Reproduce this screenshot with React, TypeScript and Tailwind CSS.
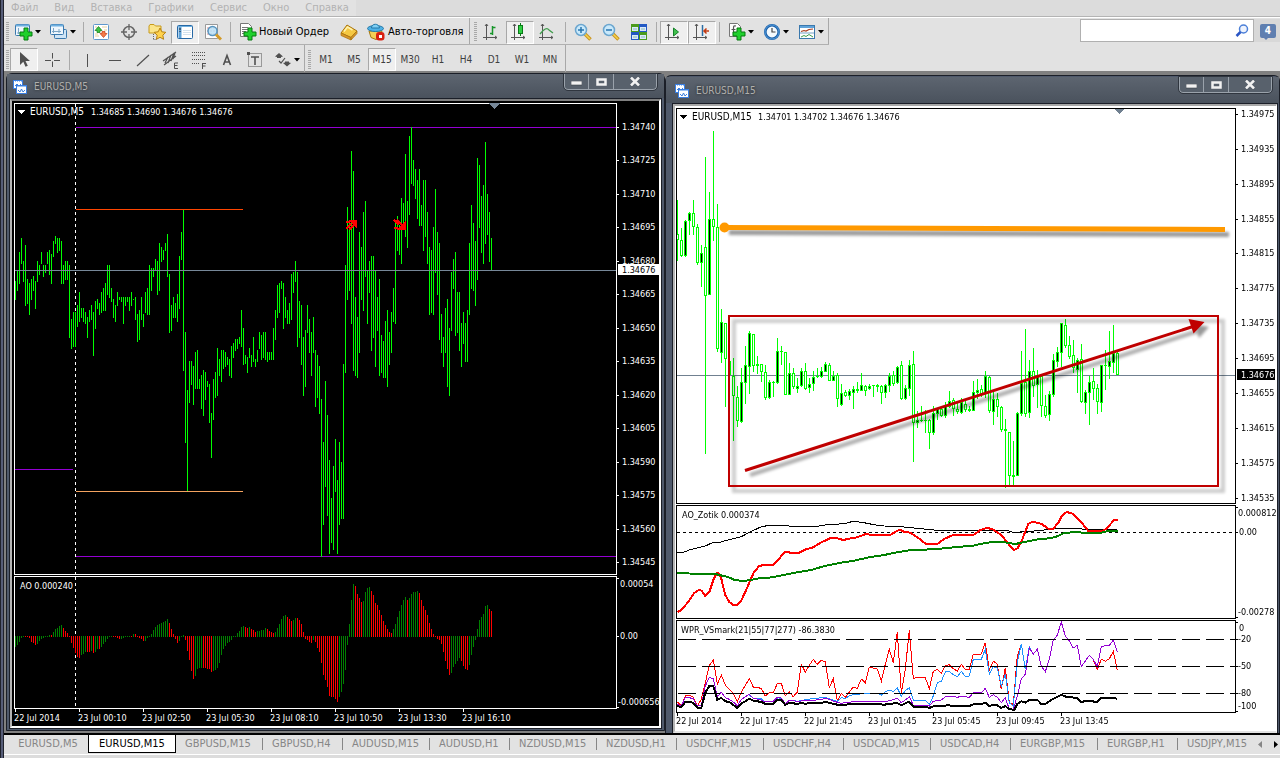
import React from "react";

const UI = "font-['DejaVu_Sans_Condensed','DejaVu_Sans','Noto_Sans',sans-serif]";

/* ---------- market data (thirds of a pixel, measured down from y = 100) ---------- */

const M5_BARS =
  "543-600 511-573 456-552 414-492 483-546 435-618 537-612 549-645 537-600 528-573 543-627 483-546 495-525 456-492 495-531 495-519 456-492 450-525 462-552 423-471 408-432 414-459 414-453 423-552 495-552 483-540 483-540 495-714 657-747 636-741 636-741 615-681 576-666 624-654 624-666 636-672 651-714 630-666 615-660 636-768 603-687 597-627 609-645 576-639 564-633 549-633 495-585 495-594 564-606 597-654 615-666 576-618 591-600 591-606 591-672 591-618 591-606 591-633 576-618 597-600 591-660 642-726 630-720 591-660 642-681 576-639 564-645 495-645 504-573 504-531 477-513 483-585 429-573 441-486 450-480 429-453 402-531 522-699 615-693 591-654 609-654 582-666 468-627 396-480 330-813 696-1029 870-1172 783-909 783-855 798-915 756-867 750-867 837-867 825-927 810-948 816-900 843-861 852-969 939-1074 837-960 816-894 744-888 777-828 750-846 750-807 756-801 771-795 777-828 738-834 729-774 717-753 717-747 711-732 630-741 684-795 765-792 771-819 744-774 765-801 711-786 777-801 750-786 696-747 705-780 696-774 696-780 756-786 756-780 756-780 684-780 630-720 555-654 549-639 543-567 549-687 591-654 630-672 609-672 522-660 516-579 483-546 516-741 603-714 615-795 711-888 690-861 615-699 657-759 696-828 651-759 750-921 765-894 798-942 897-1370 1026-1275 843-1161 945-1248 1080-1362 1194-1329 1098-1350 1017-1176 1140-1362 1026-1275 1086-1257 792-1257 495-819 321-600 366-573 153-672 213-813 591-828 651-834 396-759 441-600 336-633 303-531 510-672 483-579 468-753 468-714 510-801 591-693 537-828 705-819 723-834 663-834 630-861 696-795 636-759 564-666 369-672 348-453 375-465 294-492 309-384 162-411 303-444 108-345 81-252 180-258 207-297 240-357 207-378 315-378 240-453 240-411 336-492 441-645 450-639 381-645 267-519 396-585 429-720 642-759 711-801 624-759 597-861 684-888 516-693 477-567 456-708 576-699 576-753 669-801 636-732 669-786 630-786 429-645 315-567 369-573 423-618 174-540 195-384 288-459 255-492 126-432 282-405 336-486 414-513"
    .split(" ")
    .map((s) => s.split("-").map((v) => Math.round(Number(v) / 3) + 100));

const AO_VALUES = [
  741, 735, 726, 714, 711, 711, 712, 714, 726, 729, 735, 732, 723, 717, 714, 711, 708, 705, 705, 696, 687, 684, 678, 675, 684, 693, 699, 708, 729, 744, 759, 771, 774, 765, 762, 756, 756,
  756, 753, 759, 756, 747, 747, 741, 732, 726, 717, 711, 708, 709, 711, 714, 717, 716, 714, 711, 709, 708, 708, 702, 703, 711, 714, 717, 723, 722, 714, 709, 702, 690, 681, 675, 672, 669,
  666, 663, 657, 669, 687, 702, 717, 729, 723, 711, 705, 720, 753, 780, 813, 837, 828, 807, 804, 803, 804, 805, 807, 808, 816, 813, 810, 804, 789, 765, 747, 738, 729, 726, 720, 711, 708,
  699, 693, 681, 678, 681, 684, 681, 687, 690, 696, 693, 692, 690, 689, 684, 687, 693, 696, 699, 696, 684, 672, 657, 648, 645, 651, 657, 663, 660, 654, 655, 660, 672, 696, 717, 720, 726,
  729, 720, 726, 744, 756, 789, 825, 840, 861, 888, 891, 892, 897, 906, 891, 876, 852, 810, 735, 672, 600, 552, 558, 582, 594, 606, 603, 576, 564, 561, 573, 585, 609, 615, 630, 645, 663,
  675, 687, 696, 699, 687, 672, 651, 633, 615, 600, 591, 600, 594, 582, 576, 575, 573, 579, 600, 618, 630, 645, 669, 687, 702, 709, 717, 720, 732, 756, 783, 807, 825, 819, 801, 792, 783,
  774, 783, 798, 807, 810, 795, 765, 741, 720, 687, 660, 651, 642, 618, 615, 627, 633,
];

/* wickTop, bodyTop, bodyBottom, wickBottom, u = rising / d = falling */
const M15_CANDLES =
  "300,402,420,483,d 384,420,467,471,d 360,363,467,471,u 336,340,364,405,u 300,340,382,405,d 372,381,488,495,d 435,460,488,560,u 171,441,587,1062,d 276,358,584,585,u 93,358,382,423,d 312,381,748,756,d 627,666,760,789,u 669,669,778,921,d 782,784,826,828,d 774,827,887,1022,d 858,891,962,981,d 804,846,965,968,u 738,796,849,912,u 693,699,800,882,u 702,702,798,816,d 768,791,798,822,d 792,792,815,846,d 795,815,893,900,d 840,846,895,897,u 843,846,850,891,u 714,753,849,852,u 738,753,756,795,d 756,756,884,886,d 789,819,884,886,u 804,819,861,867,d 834,858,867,879,u 804,813,858,860,u 789,813,868,870,d 834,852,864,879,u 813,831,851,873,u 804,828,831,834,u 801,813,831,834,u 786,793,815,816,u 789,795,842,843,d 813,827,842,843,u 819,825,898,921,d 852,878,916,917,u 870,877,887,891,d 867,873,887,900,u 858,867,878,926,u 846,867,872,879,d 819,855,872,873,u 855,858,872,888,d 852,858,868,870,u 855,855,858,891,u 852,856,860,876,u 855,858,878,911,d 852,855,878,893,u 819,828,857,876,u 813,825,851,858,d 798,801,850,852,u 783,796,898,899,d 855,864,898,900,u 780,796,868,888,u 753,793,968,1086,d 933,960,970,984,u 918,960,963,966,u 930,960,962,999,d 957,960,1000,1047,d 918,939,998,1005,u 924,924,942,960,u 918,927,948,950,d 906,915,949,954,u 873,903,921,924,u 894,900,927,947,d 903,926,935,941,d 894,906,938,942,u 897,912,930,936,d 918,927,932,936,d 843,877,932,934,u 837,870,880,896,u 855,867,885,891,d 813,828,879,894,u 828,831,933,938,d 870,897,935,974,u 879,897,922,951,d 918,921,990,996,d 957,987,993,1164,d 996,996,1128,1155,d 1023,1125,1131,1155,u 936,939,1127,1128,u 753,849,941,947,u 687,846,942,950,d 780,813,938,954,u 744,813,857,891,d 810,828,855,923,u 822,828,917,951,d 885,918,947,954,d 873,882,945,963,u 762,780,884,891,u 741,756,785,800,u 669,669,758,800,u 657,676,737,744,d 708,735,771,777,d 720,765,803,819,d 774,780,809,879,u 732,777,905,909,d 870,876,908,941,u 828,845,878,975,u 804,843,867,900,d 852,864,906,942,d 795,796,908,936,u 750,795,798,870,u 693,783,802,837,u 675,759,788,819,u 756,759,825,826,d"
    .split(" ")
    .map((s) => {
      const p = s.split(",");
      const n = p.slice(0, 4).map((v) => Math.round(Number(v) / 3) + 100);
      return { wt: n[0], bt: n[1], bb: n[2], wb: n[3], up: p[4] === "u" };
    });

/* indicator curves: x:y pairs in thirds of a pixel from (664, 496) */
const curve = (src: string) =>
  src
    .trim()
    .split(/\s+/)
    .map((p) => {
      const [x, y] = p.split(":").map(Number);
      return `${(664 + x / 3).toFixed(1)},${(496 + y / 3).toFixed(1)}`;
    })
    .join(" ");

const ZOTIK_BLACK = curve(
  "40:170 56:170 75:162 100:156 124:150 145:140 170:138 200:130 232:122 260:107 290:93 315:88 360:88 380:91 460:91 490:86 540:83 568:76 600:80 630:86 660:90 700:91 750:96 820:103 930:103 1028:103 1048:109 1090:107 1130:103 1180:98 1240:97 1260:100 1360:100"
);
const ZOTIK_RED = curve(
  "40:348 52:342 75:315 90:292 104:282 113:284 124:300 136:288 148:252 158:232 164:232 172:248 184:297 196:318 208:327 220:326 232:313 244:288 256:260 270:228 285:211 300:206 328:206 345:189 362:167 385:171 403:171 425:160 448:154 470:140 500:126 520:127 538:132 555:128 580:124 605:114 625:117 678:117 695:107 708:101 720:107 738:110 760:124 785:143 820:144 840:129 865:118 888:117 928:117 948:103 968:96 985:99 1013:118 1038:150 1051:162 1061:156 1075:130 1093:84 1106:77 1133:84 1153:98 1168:98 1183:80 1193:60 1208:48 1228:54 1253:80 1273:105 1318:105 1333:92 1350:72 1361:72"
);
const ZOTIK_GREEN = curve(
  "40:231 90:233 155:234 165:237 190:242 210:251 235:255 255:253 285:247 325:244 360:237 400:229 445:221 485:209 530:200 570:194 615:184 660:177 700:169 740:162 810:160 850:156 888:152 928:149 948:144 983:138 1018:138 1053:144 1078:139 1128:129 1158:127 1183:120 1198:112 1238:107 1258:111 1308:111 1328:106 1361:105"
);
const WPR_BLACK = curve(
  "40:630 52:633 64:618 76:618 88:620 100:635 112:635 124:590 136:570 148:570 160:611 172:606 184:616 196:618 208:627 220:636 232:622 244:616 256:608 268:614 280:616 292:618 304:624 316:623 328:623 340:612 352:611 364:627 376:620 388:622 400:624 412:621 424:623 440:621 470:621 485:618 510:624 530:628 560:624 640:624 660:626 700:621 712:628 724:622 736:617 748:632 784:632 796:636 808:631 840:630 852:627 864:630 916:630 928:625 952:625 964:620 976:630 988:627 1000:628 1012:636 1024:630 1036:640 1051:641 1060:624 1072:616 1084:620 1096:611 1120:611 1132:624 1144:624 1158:614 1173:606 1192:597 1206:602 1240:606 1252:618 1270:614 1300:618 1312:606 1348:605 1360:609"
);
const WPR_PURPLE = curve(
  "40:625 52:630 64:605 76:605 88:608 100:630 112:628 124:570 136:544 148:548 160:602 172:589 184:605 196:610 208:618 220:630 232:610 256:595 268:606 292:612 304:618 328:616 340:604 352:606 364:624 376:613 400:616 424:614 472:611 484:606 508:615 530:622 560:618 670:616 700:607 712:620 724:612 736:602 748:628 784:628 796:630 808:616 832:612 844:602 868:600 880:604 892:601 916:604 928:590 952:590 964:577 976:604 988:596 1000:604 1012:620 1024:605 1036:640 1048:640 1060:600 1072:548 1084:535 1096:456 1108:474 1120:460 1132:510 1144:527 1156:490 1168:432 1180:418 1192:378 1204:420 1216:435 1228:456 1240:448 1252:511 1264:495 1276:478 1288:490 1300:513 1312:451 1336:448 1348:433 1360:468"
);
const WPR_BLUE = curve(
  "256:597 268:606 292:608 304:618 328:615 345:604 364:624 376:612 400:616 430:610 484:604 508:612 520:616 532:605 544:607 556:600 568:595 640:592 652:598 664:588 676:582 688:587 700:576 712:600 724:584 736:575 748:613 784:613 796:625 808:600 820:560 832:556 844:528 856:526 868:536 880:542 892:526 904:541 916:540 928:490 952:490 964:460 976:534 988:512 1000:516 1012:570 1024:535 1036:620 1048:630 1060:500 1072:443 1084:520 1096:452 1108:474"
);
const WPR_RED = curve(
  "40:618 52:630 64:600 76:598 88:604 100:630 112:610 124:560 136:508 148:492 160:564 172:537 184:567 208:592 220:618 232:588 256:548 268:573 292:577 304:600 316:590 328:590 340:563 352:562 364:600 376:588 388:602 400:588 412:505 424:528 436:508 448:490 460:505 472:493 484:497 496:575 508:548 520:615 532:592 544:604 568:573 580:577 592:549 604:560 616:513 640:519 652:556 664:505 676:460 688:500 700:408 712:590 724:520 736:402 748:548 760:544 784:545 796:578 808:526 820:520 832:532 844:510 856:506 868:518 880:525 892:505 904:520 916:520 928:475 952:474 964:440 976:522 988:495 1000:505 1012:580 1024:515 1036:620 1048:625 1060:480 1072:445"
);
const WPR_RED_TAIL = curve("1288:492 1300:520 1312:490 1324:496 1336:488 1348:466 1360:522");

/* ---------- charts ---------- */

function ChartM5() {
  const prices = ["1.34740", "1.34725", "1.34710", "1.34695", "1.34680", "1.34665", "1.34650", "1.34635", "1.34620", "1.34605", "1.34590", "1.34575", "1.34560", "1.34545"];
  const times = ["22 Jul 2014", "23 Jul 00:10", "23 Jul 02:50", "23 Jul 05:30", "23 Jul 08:10", "23 Jul 10:50", "23 Jul 13:30", "23 Jul 16:10"];
  return (
    <svg viewBox="12 101 647 625" className={`block h-auto w-full bg-black text-[9px] ${UI}`} role="img" aria-label="EURUSD,M5" shapeRendering="crispEdges">
      <path d="M75.5 104V574M75.5 577V708" stroke="#fff" strokeDasharray="3 3" />
      <path d="M76 127.5H616M15 469.5H73M76 556.5H616" stroke="#9400d3" />
      <path d="M76 209.5H243" stroke="#ff4500" />
      <path d="M76 491.5H243" stroke="#f4a460" />
      {M5_BARS.map(([a, b], i) => (
        <rect key={i} x={15 + 2 * i} y={a} width={1} height={Math.max(1, b - a)} fill="#0f0" />
      ))}
      <path d="M15 270.5H616" stroke="#778899" />
      {AO_VALUES.map((v, i) => {
        const y = Math.round(v / 3) + 400;
        const rising = i === 0 || v < AO_VALUES[i - 1];
        const top = Math.min(y, 636);
        return <rect key={i} x={15 + 2 * i} y={top} width={1} height={Math.max(1, Math.max(y, 637) - top)} fill={rising ? "#008000" : "#f00"} />;
      })}
      <g stroke="#f00" fill="#f00">
        <path d="M346 229l5-5M349 230l5-5M346 222h4" strokeWidth="2" />
        <path d="M349 220h7v7z" />
        <path d="M394 220l5 5M397 220l5 5M394 228h4" strokeWidth="2" />
        <path d="M398 229h7v-7z" />
      </g>
      <path d="M14.5 103.5H616.5V574.5H14.5ZM14.5 576.5H616.5V708.5H14.5Z" fill="none" stroke="#fff" />
      <path d="M489 103h11l-5.500 6z" fill="#778899" />
      <path d="M18 110h7l-3.500 4z" fill="#fff" />
      <g fill="#fff">
        <text x="30" y="115" className="text-[10px]">EURUSD,M5</text>
        <text x="91" y="115">1.34685 1.34690 1.34676 1.34676</text>
        <text x="20" y="589">AO 0.000240</text>
        {prices.map((p, i) => {
          const y = Math.round(127 + i * 33.46);
          return (
            <g key={p}>
              <rect x="617" y={y} width="2" height="1" />
              <text x="622" y={y + 3}>{p}</text>
            </g>
          );
        })}
        <rect x="618" y="264" width="41" height="11" />
        <text x="622" y="273" fill="#000">1.34676</text>
        <rect x="617" y="636" width="2" height="1" />
        <rect x="617" y="578" width="2" height="1" />
        <rect x="617" y="707" width="2" height="1" />
        <text x="620" y="587">0.00054</text>
        <text x="620" y="639">0.00</text>
        <text x="618" y="705">-0.000656</text>
        {times.map((t, i) => (
          <g key={t}>
            <rect x={15 + 64 * i} y="709" width="1" height="3" />
            <text x={14 + 64 * i} y="721">{t}</text>
          </g>
        ))}
      </g>
    </svg>
  );
}

function ChartM15() {
  const prices = ["1.34975", "1.34935", "1.34895", "1.34855", "1.34815", "1.34775", "1.34735", "1.34695", "1.34655", "1.34615", "1.34575", "1.34535"];
  const times = ["22 Jul 2014", "22 Jul 17:45", "22 Jul 21:45", "23 Jul 01:45", "23 Jul 05:45", "23 Jul 09:45", "23 Jul 13:45"];
  return (
    <svg viewBox="675 106 601 625" className={`block h-auto w-full bg-white text-[9px] ${UI}`} role="img" aria-label="EURUSD,M15" shapeRendering="crispEdges">
      <defs>
        <filter id="soft" x="-10%" y="-20%" width="120%" height="140%">
          <feGaussianBlur stdDeviation="1.500" />
        </filter>
        <filter id="softLine" filterUnits="userSpaceOnUse" x="700" y="210" width="560" height="50">
          <feGaussianBlur stdDeviation="1.500" />
        </filter>
      </defs>
      <path d="M677 375.500H1235" stroke="#708090" />
      {M15_CANDLES.map((c, i) => {
        const x = 677 + 4 * i;
        const h = Math.max(1, c.bb - c.bt);
        const left = i === 0 ? x : x - 1;
        return (
          <g key={i}>
            <rect x={x} y={c.wt} width={1} height={c.wb - c.wt} fill="#0f0" />
            <rect x={left} y={c.bt} width={x + 2 - left} height={h} fill="#0f0" />
            {h > 2 && <rect x={x} y={c.bt + 1} width={1} height={h - 2} fill={c.up ? "#000" : "#fff"} />}
          </g>
        );
      })}

      <g shapeRendering="auto">
        <g stroke="#000" fill="none" opacity="0.4">
          <path d="M729 232.500L1229 234.500" strokeWidth="5" filter="url(#softLine)" />
          <path d="M734 321H1223V491H734Z" strokeWidth="4" opacity="0.500" filter="url(#soft)" />
          <path d="M750 475L1198 331" strokeWidth="4" opacity="0.800" filter="url(#soft)" />
          <path d="M1194 324L1209 327L1199 338Z" fill="#000" stroke="none" filter="url(#soft)" />
        </g>
        <path d="M724 227.500L1225 229.500" stroke="#ff9900" strokeWidth="5" />
        <circle cx="724.500" cy="227.500" r="5" fill="#ff9900" />
        <path d="M729 316H1218V486H729Z" fill="none" stroke="#c00000" strokeWidth="2" />
        <path d="M745 470.500L1193 326.500" stroke="#c00000" strokeWidth="3" />
        <path d="M1188.500 319L1204.500 322L1193.500 333.500Z" fill="#c00000" />
      </g>

      <path d="M677 532.500H1235" stroke="#000" strokeDasharray="3 3" />
      <g fill="none">
        <polyline points={ZOTIK_BLACK} stroke="#000" />
        <polyline points={ZOTIK_RED} stroke="#f00" strokeWidth="2" />
        <polyline points={ZOTIK_GREEN} stroke="#008000" strokeWidth="2" />
        <polyline points={WPR_RED} stroke="#f00" />
        <polyline points={WPR_RED_TAIL} stroke="#f00" />
        <polyline points={WPR_BLUE} stroke="#1e90ff" />
        <polyline points={WPR_PURPLE} stroke="#9400d3" />
        <polyline points={WPR_BLACK} stroke="#000" strokeWidth="2" />
      </g>
      <path d="M678 639.500H1235M678 666.500H1235M678 693.500H1235" stroke="#000" strokeDasharray="18 6" />

      <path d="M676.500 108.500H1235.500V503.500H676.500ZM676.500 505.500H1235.500V618.500H676.500ZM676.500 620.500H1235.500V712.500H676.500Z" fill="none" stroke="#000" />
      <path d="M1114 109h11l-5.500 5z" fill="#708090" />
      <path d="M680 115h7l-3.500 4z" />
      <text x="692" y="120" className="text-[10px]">EURUSD,M15</text>
      <text x="758" y="120">1.34701 1.34702 1.34676 1.34676</text>
      <text x="682" y="518">AO_Zotik 0.000374</text>
      <text x="681" y="633">WPR_VSmark(21|55|77|277) -86.3830</text>
      {prices.map((p, i) => {
        const y = Math.round(114 + i * 34.87);
        return (
          <g key={p}>
            <rect x="1236" y={y} width="2" height="1" />
            <text x="1241" y={y + 3}>{p}</text>
          </g>
        );
      })}
      <rect x="1237" y="369" width="38" height="11" />
      <text x="1241" y="378" fill="#fff">1.34676</text>
      {[507, 532, 617, 622, 639, 666, 693, 711].map((y) => (
        <rect key={y} x="1236" y={y} width="2" height="1" />
      ))}
      <text x="1238" y="516">0.000812</text>
      <text x="1239" y="535">0.00</text>
      <text x="1238" y="615">-0.00278</text>
      <text x="1239" y="631">0</text>
      <text x="1238" y="642">-20</text>
      <text x="1238" y="669">-50</text>
      <text x="1238" y="696">-80</text>
      <text x="1238" y="709">-100</text>
      {times.map((t, i) => (
        <g key={t}>
          <rect x={677 + 64 * i} y="713" width="1" height="3" />
          <text x={676 + 64 * i} y="724">{t}</text>
        </g>
      ))}
    </svg>
  );
}

/* ---------- icons ---------- */

function Ico({ children }: { children: React.ReactNode }) {
  return (
    <svg width="18" height="18" viewBox="0 0 18 18" fill="none" aria-hidden="true" className="shrink-0">
      {children}
    </svg>
  );
}

const plus = (x: number, y: number) => (
  <path d={`M${x + 4} ${y}h4v4h4v4h-4v4h-4v-4h-4v-4h4z`} fill="#1fd02c" stroke="#067a10" />
);
const axes = <path d="M3.500 1v16M0 14.500h14M2 3l1.500-2L5 3M12 13l2 1.500-2 1.500" stroke="#555" />;

const icons: Record<string, React.ReactNode> = {
  newChart: (
    <>
      <rect x="0.500" y="1.500" width="14" height="11" rx="1" fill="#eef6fd" stroke="#3a78ad" />
      <path d="M1 2.500h13" stroke="#6fb0e0" strokeWidth="2" />
      <path d="M3.500 5v6M2 10h9" stroke="#7ba5c5" />
      {plus(5, 5)}
    </>
  ),
  profiles: (
    <>
      <rect x="4.500" y="6.500" width="12" height="9" rx="1" fill="#cfe5f7" stroke="#3a78ad" />
      <rect x="0.500" y="1.500" width="13" height="10" rx="1" fill="#eef6fd" stroke="#3a78ad" />
      <path d="M1 2.500h12" stroke="#6fb0e0" strokeWidth="2" />
      <path d="M3.500 5v5M2 8.500h9M9 6v4" stroke="#7ba5c5" />
    </>
  ),
  market: (
    <>
      <rect x="1.500" y="1.500" width="15" height="15" rx="1" fill="#fff" stroke="#5f97cc" />
      <path d="M3 4h2M10 4h5M12 7h3M3 13h4M3 11h3" stroke="#e6cf9c" />
      <path d="M6.500 3.500l3.500 4H8v2H5v-2H3z" fill="#3ec343" stroke="#107a16" strokeWidth="0.700" />
      <path d="M11.500 14.500l-3.500-4h2v-2h3v2h2z" fill="#f37c4a" stroke="#c93c12" strokeWidth="0.700" />
    </>
  ),
  target: (
    <>
      <circle cx="9" cy="9" r="5.500" stroke="#666" strokeWidth="1.500" />
      <path d="M9 1v6M9 11v6M1 9h6M11 9h6" stroke="#666" strokeWidth="1.300" />
    </>
  ),
  navigator: (
    <>
      <path d="M1 3l1-1.500h4L7.500 3H13v7H1z" fill="#fbe58a" stroke="#c79a1c" />
      <path d="M5.500 11v6M5.500 16.500h3" stroke="#666" strokeDasharray="1 1" />
      <path d="M12 5l1.800 3.800 4 .5-3 2.900.8 4.100-3.600-2-3.600 2 .8-4.100-3-2.900 4-.5z" fill="#ffd24d" stroke="#b8820f" />
    </>
  ),
  terminal: (
    <>
      <rect x="1.500" y="2.500" width="15" height="13" rx="1" fill="#fff" stroke="#2668a5" />
      <path d="M2 3.500h14" stroke="#6fb0e0" />
      <path d="M4 4v11" stroke="#5ea3da" strokeWidth="3" />
      <path d="M4 5v2M4 8v1" stroke="#222" />
      <path d="M7 7.500h8M7 9.500h8M7 11.500h8" stroke="#d3e2ee" />
    </>
  ),
  tester: (
    <>
      <path d="M1.500 1.500h12v14h-12z" fill="#fdfdfd" stroke="#999" />
      <path d="M3 5h9M3 8h9M3 11h9" stroke="#d88" strokeDasharray="2 1" />
      <circle cx="8.500" cy="8" r="4.500" fill="#b9e0f7" fillOpacity="0.850" stroke="#5795bf" strokeWidth="1.500" />
      <path d="M12 11.500l5 5" stroke="#d39a27" strokeWidth="3" />
    </>
  ),
  order: (
    <>
      <path d="M1.500 0.500h8l3 3v10h-11z" fill="#fff" stroke="#777" />
      <path d="M3 4.500h6M3 6.500h7M3 8.500h4M3 10.500h3" stroke="#777" />
      {plus(5, 5)}
    </>
  ),
  meta: (
    <>
      <path d="M1 10l6-8 10 6-6 6.500z" fill="#f5c842" stroke="#a8720c" />
      <path d="M1 10v2.500l10 4.500v-2.500zM11 14.500V17l6-6.500V8z" fill="#d8962a" stroke="#a8720c" strokeWidth="0.700" />
      <path d="M4 8.500l3.500-4.500 5 3" stroke="#fff3b0" strokeWidth="1.500" />
    </>
  ),
  auto: (
    <>
      <path d="M2 8h13l-2 6-4 2.500-5-2z" fill="#f4cf56" stroke="#a8790e" />
      <ellipse cx="8.500" cy="5.500" rx="8" ry="3" fill="#4fb2e6" stroke="#2478a8" />
      <path d="M4.500 5C4.500 0 12 0 12.500 5z" fill="#7fd0f5" stroke="#2478a8" />
      <rect x="9" y="9" width="8.500" height="8.500" rx="3" fill="#d92011" />
      <rect x="12" y="12" width="3" height="3" fill="#fff" />
    </>
  ),
  bars: (
    <>
      {axes}
      <path d="M9.500 3v9M9.500 4.500h3M7 10.500h3" stroke="#17962a" strokeWidth="1.500" />
    </>
  ),
  candles: (
    <>
      {axes}
      <path d="M9.500 0v13" stroke="#0a7a18" />
      <rect x="7.500" y="2.500" width="4" height="8" fill="#2fd043" stroke="#0a7a18" />
    </>
  ),
  line: (
    <>
      {axes}
      <path d="M1 11c4-5 7-7 9-4l4 3" stroke="#3f9c4c" strokeWidth="1.300" />
    </>
  ),
  zoomIn: (
    <>
      <path d="M11 11l5.500 5.500" stroke="#c99320" strokeWidth="3.500" />
      <path d="M11 11l5 5" stroke="#f5d34d" strokeWidth="1.500" />
      <circle cx="7" cy="7" r="5.500" fill="#c9e9fb" stroke="#6ba6cf" strokeWidth="1.500" />
      <path d="M4 7h6M7 4v6" stroke="#2975b0" strokeWidth="1.500" />
    </>
  ),
  zoomOut: (
    <>
      <path d="M11 11l5.500 5.500" stroke="#c99320" strokeWidth="3.500" />
      <path d="M11 11l5 5" stroke="#f5d34d" strokeWidth="1.500" />
      <circle cx="7" cy="7" r="5.500" fill="#c9e9fb" stroke="#6ba6cf" strokeWidth="1.500" />
      <path d="M4 7h6" stroke="#2975b0" strokeWidth="1.500" />
    </>
  ),
  tile: (
    <>
      <rect x="1" y="1" width="8" height="8" fill="#4b9b1c" />
      <rect x="9" y="1" width="8" height="8" fill="#2359c4" />
      <rect x="1" y="9" width="8" height="8" fill="#2359c4" />
      <rect x="9" y="9" width="8" height="8" fill="#4b9b1c" />
      <path d="M2 4h6v4H2zM10 4h6v4h-6zM2 12h6v4H2zM10 12h6v4h-6z" fill="#dceaf8" />
      <path d="M3 6h4M11 6h4M3 14h4M11 14h4" stroke="#8bb" />
    </>
  ),
  autoScroll: (
    <>
      {axes}
      <path d="M8.500 5v8l5-4z" fill="#3fc14c" stroke="#17802a" />
    </>
  ),
  shift: (
    <>
      {axes}
      <path d="M9.500 2v11" stroke="#2b6ca3" strokeWidth="1.500" />
      <path d="M16 8h-5M13.500 5.500L11 8l2.500 2.500" stroke="#c23b14" strokeWidth="1.500" />
    </>
  ),
  indicators: (
    <>
      <path d="M1.500 0.500h8l3 3v10h-11z" fill="#fff" stroke="#777" />
      <path d="M8 3c-2-.5-2.500 0-2.500 2v7M3.500 6.500h4" stroke="#555" strokeWidth="1.200" />
      {plus(5, 5)}
    </>
  ),
  clock: (
    <>
      <circle cx="9" cy="9" r="6.700" fill="#f4fafe" stroke="#1f63ab" strokeWidth="2.600" />
      <circle cx="9" cy="9" r="7" stroke="#4e97d8" />
      <path d="M9 5v4h3.500" stroke="#444" strokeWidth="1.200" />
    </>
  ),
  template: (
    <>
      <rect x="1.500" y="2.500" width="15" height="13" fill="#fff" stroke="#3a78ad" />
      <path d="M2 4h14" stroke="#5fa3da" strokeWidth="2" />
      <path d="M3 8.500l3-1 2 .500 3-1.500 4-.500" stroke="#a83a1c" strokeWidth="1.200" />
      <path d="M2 10h14" stroke="#3a78ad" strokeWidth="0.700" />
      <path d="M3 14l3-1.500 2 1 3-2 4 2.500" stroke="#3f9c4c" />
    </>
  ),
  cursor: <path d="M5 1v13l3.300-3.200 2.200 5 2.300-1-2.300-4.800H15z" fill="#505050" />,
  cross: <path d="M9.500 2v5.500M9.500 10.500V16M2 9.500h6M11 9.500h6" stroke="#505050" />,
  vline: <path d="M9.500 3v13" stroke="#505050" />,
  hline: <path d="M3 9.500h12" stroke="#505050" />,
  trend: <path d="M3 15L15 4" stroke="#505050" strokeWidth="1.200" />,
  channel: (
    <>
      <path d="M1 10L14 1M2 14L14 5M3 12l3-6M6 12l3-8M9 10l3-8M11 8l2-6" stroke="#505050" strokeWidth="1.200" />
      <path d="M16 12h-3.500v5.500H16M12.500 14.500h3" stroke="#505050" />
    </>
  ),
  fibo: (
    <>
      <path d="M2 1.500h14M2 4.500h14M2 8.500h14M2 12.500h8" stroke="#505050" strokeDasharray="1 1" />
      <path d="M16 12.500h-3.500M12.500 12v6M12.500 15h3" stroke="#505050" />
    </>
  ),
  letterA: <path d="M5.500 14L9 4.500l3.500 9.500M6.500 11h5" stroke="#505050" strokeWidth="1.600" />,
  label: (
    <>
      <path d="M2.500 2.500h13v13h-13z" stroke="#505050" strokeDasharray="1 1" />
      <path d="M5 6h8M9 6v8" stroke="#505050" strokeWidth="1.600" />
      <path d="M1 1h3v3H1z" fill="#505050" />
    </>
  ),
  arrows: (
    <>
      <path d="M1 5.500L5 2l4 3.500-2 .500v1H3V6zM9 12l2-.500v-1h4v1l2 .500-4 3.500z" fill="#505050" />
      <path d="M5 10l2 2 4-5" stroke="#505050" strokeWidth="1.200" />
    </>
  ),
};

/* ---------- toolbars ---------- */

const pressedCls = "border border-t-[#a8a8a8] border-l-[#a8a8a8] border-r-white border-b-white bg-[#efefef]";

function Tool({ name, label, pressed, menu }: { name: string; label: string; pressed?: boolean; menu?: boolean }) {
  return (
    <button
      type="button"
      aria-label={label}
      aria-pressed={pressed}
      className={`flex h-[23px] shrink-0 items-center justify-center ${menu ? "w-[35px]" : "w-7"} ${pressed ? pressedCls : ""}`}
    >
      <Ico>{icons[name]}</Ico>
      {menu && (
        <svg width="6" height="4" viewBox="0 0 6 4" aria-hidden="true" className="ml-[2px] shrink-0">
          <path d="M0 0h6L3 3.500z" fill="#000" />
        </svg>
      )}
    </button>
  );
}

const Grip = () => <span className="mr-px ml-[2px] h-5 w-[3px] shrink-0 bg-[repeating-linear-gradient(to_bottom,#a8a8a8_0_1px,#e2e2e2_1px_2px)]" />;
const Sep = () => <span className="mx-[3px] h-5 w-px shrink-0 bg-[#aaaaaa]" />;

function ToolbarMain() {
  return (
    <div className="flex h-[27px] items-center border-b border-[#b0b0b0]">
      <div className="flex h-full items-center border-r border-[#a8a8a8] pt-[2px]">
        <Grip />
        <Tool name="newChart" label="Новый график" menu />
        <Tool name="profiles" label="Профили" menu />
        <Sep />
        <Tool name="market" label="Обзор рынка" />
        <Tool name="target" label="Окно данных" />
        <Tool name="navigator" label="Навигатор" />
        <Tool name="terminal" label="Терминал" pressed />
        <Tool name="tester" label="Тестер" />
        <Sep />
        <button type="button" className="flex h-[23px] w-[101px] shrink-0 items-center gap-[2px] pl-[5px] whitespace-nowrap">
          <Ico>{icons.order}</Ico>
          Новый Ордер
        </button>
        <Tool name="meta" label="MetaEditor" />
        <button type="button" className="flex h-[23px] w-[106px] shrink-0 items-center gap-[3px] pl-[4px] whitespace-nowrap">
          <Ico>{icons.auto}</Ico>
          Авто-торговля
        </button>
      </div>
      <div className="flex h-full items-center border-r border-[#a8a8a8] pt-[2px] pl-[2px]">
        <Grip />
        <Tool name="bars" label="Бары" />
        <Tool name="candles" label="Свечи" pressed />
        <Tool name="line" label="Линия" />
        <Sep />
        <Tool name="zoomIn" label="Увеличить" />
        <Tool name="zoomOut" label="Уменьшить" />
        <Tool name="tile" label="Окна плиткой" />
        <Sep />
        <Tool name="autoScroll" label="Автопрокрутка" pressed />
        <Tool name="shift" label="Сдвиг графика" pressed />
        <Sep />
        <Tool name="indicators" label="Индикаторы" menu />
        <Tool name="clock" label="Периоды" menu />
        <Tool name="template" label="Шаблоны" menu />
      </div>
    </div>
  );
}

function ToolbarDraw() {
  return (
    <div className="flex h-[27px] items-center">
      <div className="flex h-full items-center border-r border-[#a8a8a8] pt-[2px]">
        <Grip />
        <Tool name="cursor" label="Курсор" pressed />
        <Tool name="cross" label="Перекрестие" />
        <Sep />
        <Tool name="vline" label="Вертикальная линия" />
        <Tool name="hline" label="Горизонтальная линия" />
        <Tool name="trend" label="Трендовая линия" />
        <Tool name="channel" label="Канал" />
        <Tool name="fibo" label="Фибоначчи" />
        <Tool name="letterA" label="Текст" />
        <Tool name="label" label="Метка" />
        <Tool name="arrows" label="Стрелки" menu />
      </div>
      <div className="flex h-full items-center border-r border-[#a8a8a8] pt-[2px] pr-px pl-px text-[10px] text-[#404040]">
        <Grip />
        {["M1", "M5", "M15", "M30", "H1", "H4", "D1", "W1", "MN"].map((p) => (
          <button key={p} type="button" aria-pressed={p === "M15"} className={`h-[23px] w-7 shrink-0 text-center ${p === "M15" ? pressedCls : ""}`}>
            {p}
          </button>
        ))}
      </div>
    </div>
  );
}

/* ---------- windows ---------- */

function WindowTitle({ title, tall }: { title: string; tall?: boolean }) {
  const btn = "flex h-[15px] items-center justify-center border-r border-[#9aa2ab]";
  return (
    <div className={`flex items-start bg-linear-to-b from-[#5d6570] to-[#4a525d] ${tall ? "h-[26px]" : "h-6"}`}>
      <div className={`flex h-full flex-1 items-center gap-[7px] pt-px ${tall ? "pl-[9px]" : "pl-[6px]"}`}>
        <svg width="14" height="14" viewBox="0 0 14 14" aria-hidden="true">
          <rect x="0.500" y="0.500" width="9" height="8" fill="#fff" stroke="#3b7fe0" />
          <path d="M0 1h10" stroke="#3b7fe0" strokeDasharray="1 1" />
          <path d="M2 6l2-2 2 2 2-2" stroke="#3b7fe0" fill="none" />
          <rect x="3.500" y="5.500" width="10" height="8" fill="#fff" stroke="#3b7fe0" />
          <path d="M4 6.500h9" stroke="#9cc2f5" />
          <path d="M5 10l2 2 1.500-3 1.500 3 2-2" stroke="#3b7fe0" fill="none" />
        </svg>
        <h2 className="text-[10px] font-normal text-[#b0b0ae] [text-shadow:0_0_3px_#222]">{title}</h2>
      </div>
      <div className="mr-[7px] flex rounded-b-[4px] border border-t-0 border-[#9aa2ab] bg-[#58616c] outline outline-[#30363f]">
        <button type="button" aria-label="Свернуть" className={`${btn} w-6 pt-1`}>
          <svg width="11" height="5" viewBox="0 0 11 5"><path d="M0 0h11v4H0z" fill="#f2f2f2" stroke="#3a3f47" strokeWidth="0.600" /></svg>
        </button>
        <button type="button" aria-label="Развернуть" className={`${btn} w-[25px]`}>
          <svg width="11" height="8" viewBox="0 0 11 8"><path d="M1.500 1.500h8v5h-8z" fill="none" stroke="#f2f2f2" strokeWidth="2.500" /></svg>
        </button>
        <button type="button" aria-label="Закрыть" className="flex h-[15px] w-[42px] items-center justify-center">
          <svg width="10" height="9" viewBox="0 0 10 9"><path d="M1 0.500l8 8M9 0.500l-8 8" stroke="#f2f2f2" strokeWidth="2.500" /></svg>
        </button>
      </div>
    </div>
  );
}

const tabs = ["EURUSD,M5", "EURUSD,M15", "GBPUSD,M15", "GBPUSD,H4", "AUDUSD,M15", "AUDUSD,H1", "NZDUSD,M15", "NZDUSD,H1", "USDCHF,M15", "USDCHF,H4", "USDCAD,M15", "USDCAD,H4", "EURGBP,M15", "EURGBP,H1", "USDJPY,M15"];

const tabWidth = (i: number) => {
  if (i === 0) return "w-[84px] justify-center pl-1";
  if (i === tabs.length - 1) return "pl-[9px]";
  return tabs[i].endsWith("M15") ? "w-[87px] pl-[9px]" : "w-20 pl-[9px]";
};

export default function App() {
  return (
    <div className={`flex w-full overflow-hidden bg-[#e2e2e2] text-[11px] leading-4 text-black ${UI}`}>
      <div className="w-1 shrink-0 border-x border-[#20222c] bg-[#565d78]" />
      <div className="min-w-0 flex-1">
        <nav className="flex h-[17px] border-b border-[#b4b4b4] bg-[#dcdcdc] text-[#b2b2b2]">
          <ul className="flex gap-4 bg-[#e2e2e2] pr-[7px] pl-[7px] leading-[15px]">
            {["Файл", "Вид", "Вставка", "Графики", "Сервис", "Окно", "Справка"].map((m) => (
              <li key={m}><a href="#">{m}</a></li>
            ))}
          </ul>
        </nav>

        <div className="flex h-[54px] border-t border-white">
          <div className="min-w-0">
            <ToolbarMain />
            <ToolbarDraw />
          </div>
          <div className="mt-px ml-auto flex h-[23px]">
            <label className="flex w-[174px] items-center border border-[#b0b0b0] bg-white">
              <input type="text" aria-label="Поиск" className="min-w-0 flex-1 bg-transparent px-1 outline-none" />
              <svg width="14" height="14" viewBox="0 0 14 14" aria-hidden="true" className="mr-1">
                <circle cx="8.500" cy="5" r="4" fill="#eef3fd" stroke="#4b7fd8" strokeWidth="1.500" />
                <path d="M5.500 8L1.500 12" stroke="#2a55c4" strokeWidth="2.500" />
              </svg>
            </label>
            <button type="button" aria-label="Сообщения" className="flex w-[26px] items-center justify-center bg-[#d8d8d8] pl-[2px]">
              <span className="relative h-[14px] w-4 rounded-[2px] bg-[#5f7fb0] text-center text-[10px] leading-[14px] font-bold text-white">
                4
                <span className="absolute top-3 left-[2px] border-4 border-transparent border-t-[#5f7fb0]" />
              </span>
            </button>
          </div>
        </div>

        <main className="grid grid-cols-[661fr_615fr] items-start overflow-hidden bg-[#808080] pt-[2px]">
          <section className="ml-[2px] rounded-t-md border border-[#1b1f28] bg-[#505a6c]">
            <WindowTitle title="EURUSD,M5" />
            <div className="mr-[2px] mb-px ml-[2px] border border-[#1b1f28]">
              <div className="border-2 border-t-[#808080] border-r-white border-b-white border-l-[#b4b4b4]">
                <ChartM5 />
              </div>
            </div>
          </section>
          <section className="mt-[2px] rounded-t-md border border-b-0 border-[#1b1f28] bg-[#505a6c] pt-px">
            <WindowTitle title="EURUSD,M15" tall />
            <div className="mr-px ml-[6px] border border-b-0 border-[#1b1f28]">
              <div className="border-t-2 border-r border-b-2 border-l-2 border-t-[#a8a8a8] border-r-white border-b-[#e2e2e2] border-l-[#b4b4b4]">
                <ChartM15 />
              </div>
            </div>
          </section>
        </main>

        <div className="flex h-[22px] items-start border-t-2 border-b border-t-black border-b-white text-[#868686]">
          {tabs.map((t, i) => (
            <button
              key={t}
              type="button"
              className={
                i === 1
                  ? "h-[18px] w-[88px] shrink-0 border border-t-0 border-black bg-white text-center text-black"
                  : `relative flex h-[18px] shrink-0 items-center ${tabWidth(i)}`
              }
            >
              {t}
              {i > 1 && i < tabs.length - 1 && <span className="absolute top-[3px] right-0 h-3 w-px bg-[#868686]" />}
            </button>
          ))}
          <span className="ml-auto flex h-[18px] shrink-0 items-center gap-3 pr-[2px]">
            <button type="button" aria-label="Предыдущие">
              <svg width="4" height="7" viewBox="0 0 4 7"><path d="M4 0v7L0 3.500z" fill="#868686" /></svg>
            </button>
            <button type="button" aria-label="Следующие">
              <svg width="4" height="7" viewBox="0 0 4 7"><path d="M0 0v7l4-3.500z" fill="#000" /></svg>
            </button>
          </span>
        </div>
        <footer className="h-1 bg-[#dcdcdc]" />
      </div>
    </div>
  );
}
